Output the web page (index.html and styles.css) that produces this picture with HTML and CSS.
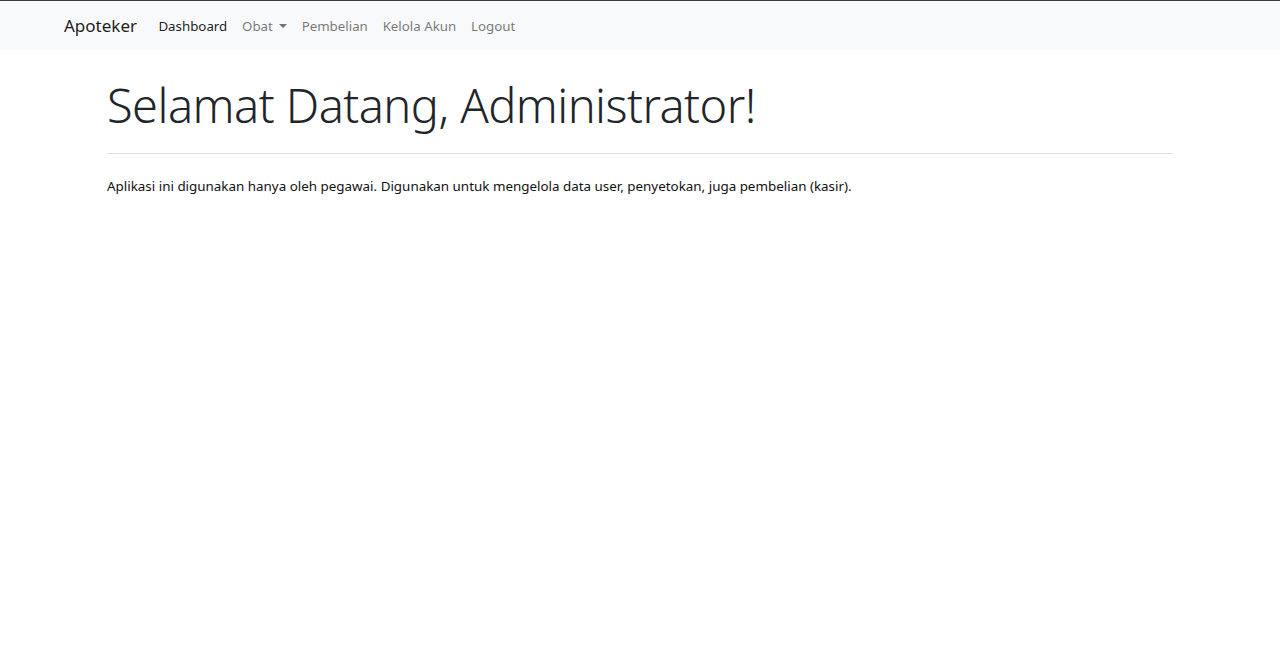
FILE: index.html
```html
<!DOCTYPE html>
<html lang="id">
<head>
<meta charset="utf-8">
<title>Apoteker</title>
<link rel="stylesheet" href="styles.css">
</head>
<body>
<nav class="navbar">
  <a class="brand" href="#">Apoteker</a>
  <ul class="nav">
    <li><a class="nav-link active" href="#">Dashboard</a></li>
    <li><a class="nav-link dropdown" href="#">Obat<span class="caret"></span></a></li>
    <li><a class="nav-link" href="#">Pembelian</a></li>
    <li><a class="nav-link" href="#">Kelola Akun</a></li>
    <li><a class="nav-link" href="#">Logout</a></li>
  </ul>
</nav>
<main class="content">
  <h1 class="display">Selamat Datang, Administrator!</h1>
  <hr class="divider">
  <p class="lead-text">Aplikasi ini digunakan hanya oleh pegawai. Digunakan untuk mengelola data user, penyetokan, juga pembelian (kasir).</p>
</main>
</body>
</html>
```
FILE: styles.css
```css
* { box-sizing: border-box; }
html, body { margin: 0; padding: 0; }
body {
  font-family: "Noto Sans", "Open Sans", sans-serif;
  font-size: 14.4px;
  color: #212529;
  background: #fff;
  border-top: 1px solid #3a3a3a;
}
a { text-decoration: none; }
.navbar {
  height: 49px;
  background: #f8f9fa;
  display: flex;
  align-items: center;
  padding: 0 0 0 64px;
}
.brand {
  font-size: 17px;
  color: rgba(0,0,0,.9);
  margin-right: 14px;
}
.nav {
  display: flex;
  list-style: none;
  margin: 0;
  padding: 0;
}
.nav-link {
  display: flex;
  align-items: center;
  padding: 7px 7.4px;
  font-size: 13.3px;
  color: rgba(0,0,0,.55);
}
.nav-link.active { color: rgba(0,0,0,.9); }
.caret {
  display: inline-block;
  margin-left: 6px;
  width: 0; height: 0;
  border-top: 4.5px solid currentColor;
  border-left: 4px solid transparent;
  border-right: 4px solid transparent;
}
.content {
  max-width: 1066px;
  margin: 0 auto;
  padding-top: 27px;
}
.display {
  font-weight: 300;
  font-size: 47px;
  letter-spacing: -0.55px;
  line-height: 1.2;
  margin: 0;
}
.divider {
  border: 0;
  border-top: 1px solid #dcdde0;
  margin: 20px 0 23px;
}
.lead-text { margin: 0; font-size: 13.4px; color: #111; }
```
